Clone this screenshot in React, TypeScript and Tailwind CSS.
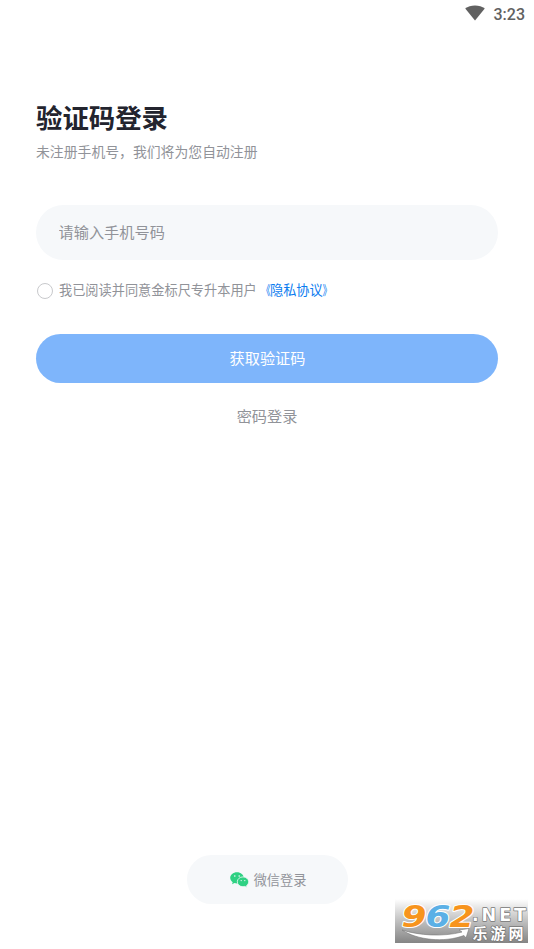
import { useState } from 'react';

function StatusBar() {
    return (
        <div className="flex h-[28px] items-center justify-end gap-[9px] pr-[9px] text-[#616161]">
            <svg width="20" height="16" viewBox="0 0 20 16" fill="currentColor" className="mb-[2px]">
                <path d="M10 15.6 0.2 3.6C2.8 1.5 6.2 0.4 10 0.4s7.2 1.1 9.8 3.2z" />
            </svg>
            <span className="pt-px font-['Roboto'] text-[16px] leading-[28px] font-medium">3:23</span>
        </div>
    );
}

function WechatIcon() {
    return (
        <svg width="19" height="16" viewBox="0 0 19 16">
            <path
                fill="#2fd183"
                d="M7 0.2C3.2 0.2 0.2 2.7 0.2 5.8c0 1.8 1 3.4 2.5 4.4L2 12.3l2.5-1.2c.8.2 1.6.3 2.5.3 3.7 0 6.8-2.5 6.8-5.6S10.7.2 7 .2z"
            />
            <path
                fill="#2fd183"
                stroke="#f6f8fa"
                strokeWidth="0.8"
                d="M13 4.9c-3.2 0-5.700 2.100-5.700 4.900s2.500 4.900 5.700 4.900c.7 0 1.300-.1 1.900-.3l2.100 1.200-.5-1.900c1.300-.9 2.200-2.300 2.200-3.900 0-2.800-2.600-4.900-5.700-4.900z"
            />
            <circle cx="4.8" cy="4" r="0.8" fill="#f6f8fa" />
            <circle cx="9.2" cy="4" r="0.8" fill="#f6f8fa" />
            <circle cx="11.2" cy="8.6" r="0.65" fill="#f6f8fa" />
            <circle cx="14.8" cy="8.6" r="0.65" fill="#f6f8fa" />
        </svg>
    );
}

function SiteBadge() {
    return (
        <div className="absolute top-[899px] left-[395px] h-[44px] w-[133px] bg-linear-to-b from-white to-[#858585]">
            <svg width="133" height="44" viewBox="0 0 133 44" className="overflow-visible">
                <g
                    fontFamily="DejaVu Sans, sans-serif"
                    fontWeight="bold"
                    fontStyle="italic"
                    fontSize="31"
                    stroke="#fff"
                    strokeWidth="2"
                    strokeLinejoin="round"
                    paintOrder="stroke"
                >
                    <text x="6.5" y="27.5" textLength="25" lengthAdjust="spacingAndGlyphs" fill="#f7941d">9</text>
                    <text x="30.5" y="27.5" textLength="25" lengthAdjust="spacingAndGlyphs" fill="#5bb0e6">6</text>
                    <text x="54.5" y="27.5" textLength="25" lengthAdjust="spacingAndGlyphs" fill="#f7941d">2</text>
                </g>
                <path
                    d="M7 31c17 5.5 41 7 60 2l-3-2 10-1.500-3 9.500-2-2.500C49 44 22 41 7 31z"
                    fill="#fff"
                    stroke="#777"
                    strokeWidth="0.6"
                />
                <g fill="#fff" stroke="#777" strokeWidth="1.4" strokeLinejoin="round" paintOrder="stroke">
                    <text x="77" y="21.5" fontFamily="DejaVu Sans, sans-serif" fontWeight="bold" fontSize="17.5" textLength="54" lengthAdjust="spacing">.NET</text>
                    <text x="77.5" y="39.5" fontFamily="Noto Sans CJK SC, sans-serif" fontWeight="bold" fontSize="15" textLength="51">乐游网</text>
                </g>
            </svg>
        </div>
    );
}

export default function App() {
    const [agreed, setAgreed] = useState(false);

    return (
        <div className="relative flex h-[949px] w-[534px] flex-col overflow-hidden bg-white font-['Noto_Sans_CJK_SC',sans-serif] text-[#919399]">
            <StatusBar />

            <main className="flex flex-1 flex-col px-[36px] pt-[69px]">
                <h1 className="text-[26.4px] leading-[40px] font-bold text-[#23242e]">验证码登录</h1>
                <p className="mt-[4px] text-[13.85px] leading-[20px]">未注册手机号，我们将为您自动注册</p>

                <input
                    type="tel"
                    placeholder="请输入手机号码"
                    className="mt-[44px] h-[55px] w-full rounded-full bg-[#f6f8fa] px-[22.5px] pb-[4px] text-[15.2px] outline-none placeholder:text-[#919399]"
                />

                <div className="mt-[20px] flex h-[20px] items-center text-[13.2px]">
                    <button
                        onClick={() => setAgreed(!agreed)}
                        className={agreed ? "mt-px ml-px size-[16px] rounded-full border border-[#007aff] bg-[#007aff]" : "mt-px ml-px size-[16px] rounded-full border border-[#c8c9cc]"}
                    />
                    <span className="ml-[6px]">我已阅读并同意金标尺专升本用户</span>
                    <a href="#" className="flex text-[#0b7cf0]">
                        <span className="origin-right translate-x-[0.5px] scale-x-[0.72]">《</span>
                        隐私协议
                        <span className="origin-left translate-x-[-0.5px] scale-x-[0.72]">》</span>
                    </a>
                </div>

                <button className="mt-[34px] h-[49px] w-full rounded-full bg-[#7eb5fb] pb-[2px] pl-px text-[15.2px] text-white">获取验证码</button>
                <button className="mt-[20px] h-[24px] self-center text-[15.2px] leading-[24px]">密码登录</button>

                <button className="mt-auto mb-[45px] flex h-[49px] w-[161px] items-center justify-center gap-[5px] self-center rounded-full bg-[#f6f8fa] pl-[2px] text-[13.2px]">
                    <WechatIcon />
                    微信登录
                </button>
            </main>

            <SiteBadge />
        </div>
    );
}
